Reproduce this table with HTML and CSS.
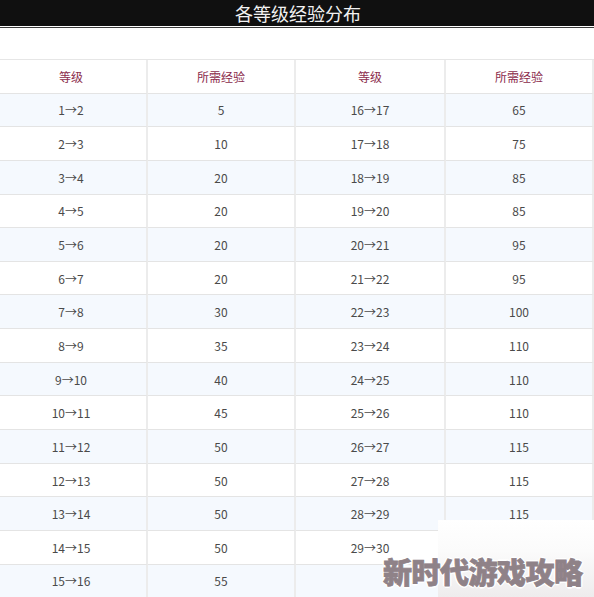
FILE: index.html
```html
<!DOCTYPE html>
<html lang="zh">
<head>
<meta charset="utf-8">
<link rel="stylesheet" href="styles.css">
</head>
<body>
<div class="page">
  <div class="titlebar"><span class="title">各等级经验分布</span></div>
  <div class="rule"></div>
  <div class="grid">
    <div class="cell head">等级</div><div class="cell head">所需经验</div><div class="cell head">等级</div><div class="cell head">所需经验</div>
    <div class="cell odd">1→2</div><div class="cell odd">5</div><div class="cell odd">16→17</div><div class="cell odd">65</div>
    <div class="cell">2→3</div><div class="cell">10</div><div class="cell">17→18</div><div class="cell">75</div>
    <div class="cell odd">3→4</div><div class="cell odd">20</div><div class="cell odd">18→19</div><div class="cell odd">85</div>
    <div class="cell">4→5</div><div class="cell">20</div><div class="cell">19→20</div><div class="cell">85</div>
    <div class="cell odd">5→6</div><div class="cell odd">20</div><div class="cell odd">20→21</div><div class="cell odd">95</div>
    <div class="cell">6→7</div><div class="cell">20</div><div class="cell">21→22</div><div class="cell">95</div>
    <div class="cell odd">7→8</div><div class="cell odd">30</div><div class="cell odd">22→23</div><div class="cell odd">100</div>
    <div class="cell">8→9</div><div class="cell">35</div><div class="cell">23→24</div><div class="cell">110</div>
    <div class="cell odd">9→10</div><div class="cell odd">40</div><div class="cell odd">24→25</div><div class="cell odd">110</div>
    <div class="cell">10→11</div><div class="cell">45</div><div class="cell">25→26</div><div class="cell">110</div>
    <div class="cell odd">11→12</div><div class="cell odd">50</div><div class="cell odd">26→27</div><div class="cell odd">115</div>
    <div class="cell">12→13</div><div class="cell">50</div><div class="cell">27→28</div><div class="cell">115</div>
    <div class="cell odd">13→14</div><div class="cell odd">50</div><div class="cell odd">28→29</div><div class="cell odd">115</div>
    <div class="cell">14→15</div><div class="cell">50</div><div class="cell">29→30</div><div class="cell"></div>
    <div class="cell odd">15→16</div><div class="cell odd">55</div><div class="cell odd"></div><div class="cell odd"></div>
  </div>
  <div class="cover"></div>
  <div class="watermark">新时代游戏攻略</div>
</div>
</body>
</html>
```
FILE: styles.css
```css
html, body {
  margin: 0;
  padding: 0;
  background: #ffffff;
}
body {
  font-family: "Noto Sans CJK SC", "Noto Sans", sans-serif;
}
.page {
  position: relative;
  width: 594px;
  height: 597px;
  overflow: hidden;
}
.titlebar {
  height: 26px;
  background: #101010;
  display: flex;
  justify-content: center;
  align-items: center;
  border-bottom: 1px solid #ffffff;
}
.title {
  color: #f2f2f2;
  font-size: 18px;
  line-height: 26px;
  margin-left: 2px;
}
.rule {
  height: 1px;
  background: #3a3a3a;
}
.grid {
  margin-top: 31px;
  margin-left: -4px;
  display: grid;
  grid-template-columns: 152px 148px 150px 148px;
  grid-auto-rows: 33.65px;
  border-top: 1px solid #e6e6e6;
}
.cell {
  display: flex;
  align-items: center;
  justify-content: center;
  font-size: 12px;
  color: #4a4a4a;
  border-bottom: 1px solid #e4e4e4;
  border-right: 2px solid #ececec;
  box-sizing: border-box;
  background: #ffffff;
}
.cell.odd {
  background: #f5f9fe;
}
.cell.head {
  color: #8c2c4c;
  font-size: 12px;
}
.cover {
  position: absolute;
  left: 438px;
  top: 520px;
  width: 156px;
  height: 77px;
  background: linear-gradient(180deg, #ffffff 0%, #fbfbfb 40%, #eeeced 100%);
}
.watermark {
  position: absolute;
  left: 383px;
  top: 552px;
  font-size: 29px;
  font-weight: 900;
  line-height: 38px;
  color: #8f8288;
  -webkit-text-stroke: 0.8px #8f8288;
  letter-spacing: -0.5px;
  white-space: nowrap;
  text-shadow: 1px 1px 0 #fff, -1px -1px 0 #fff, 1px -1px 0 #fff, -1px 1px 0 #fff, 0 2px 0 #fff, 2px 0 0 #fff, 0 -2px 0 #fff, -2px 0 0 #fff;
}
```
